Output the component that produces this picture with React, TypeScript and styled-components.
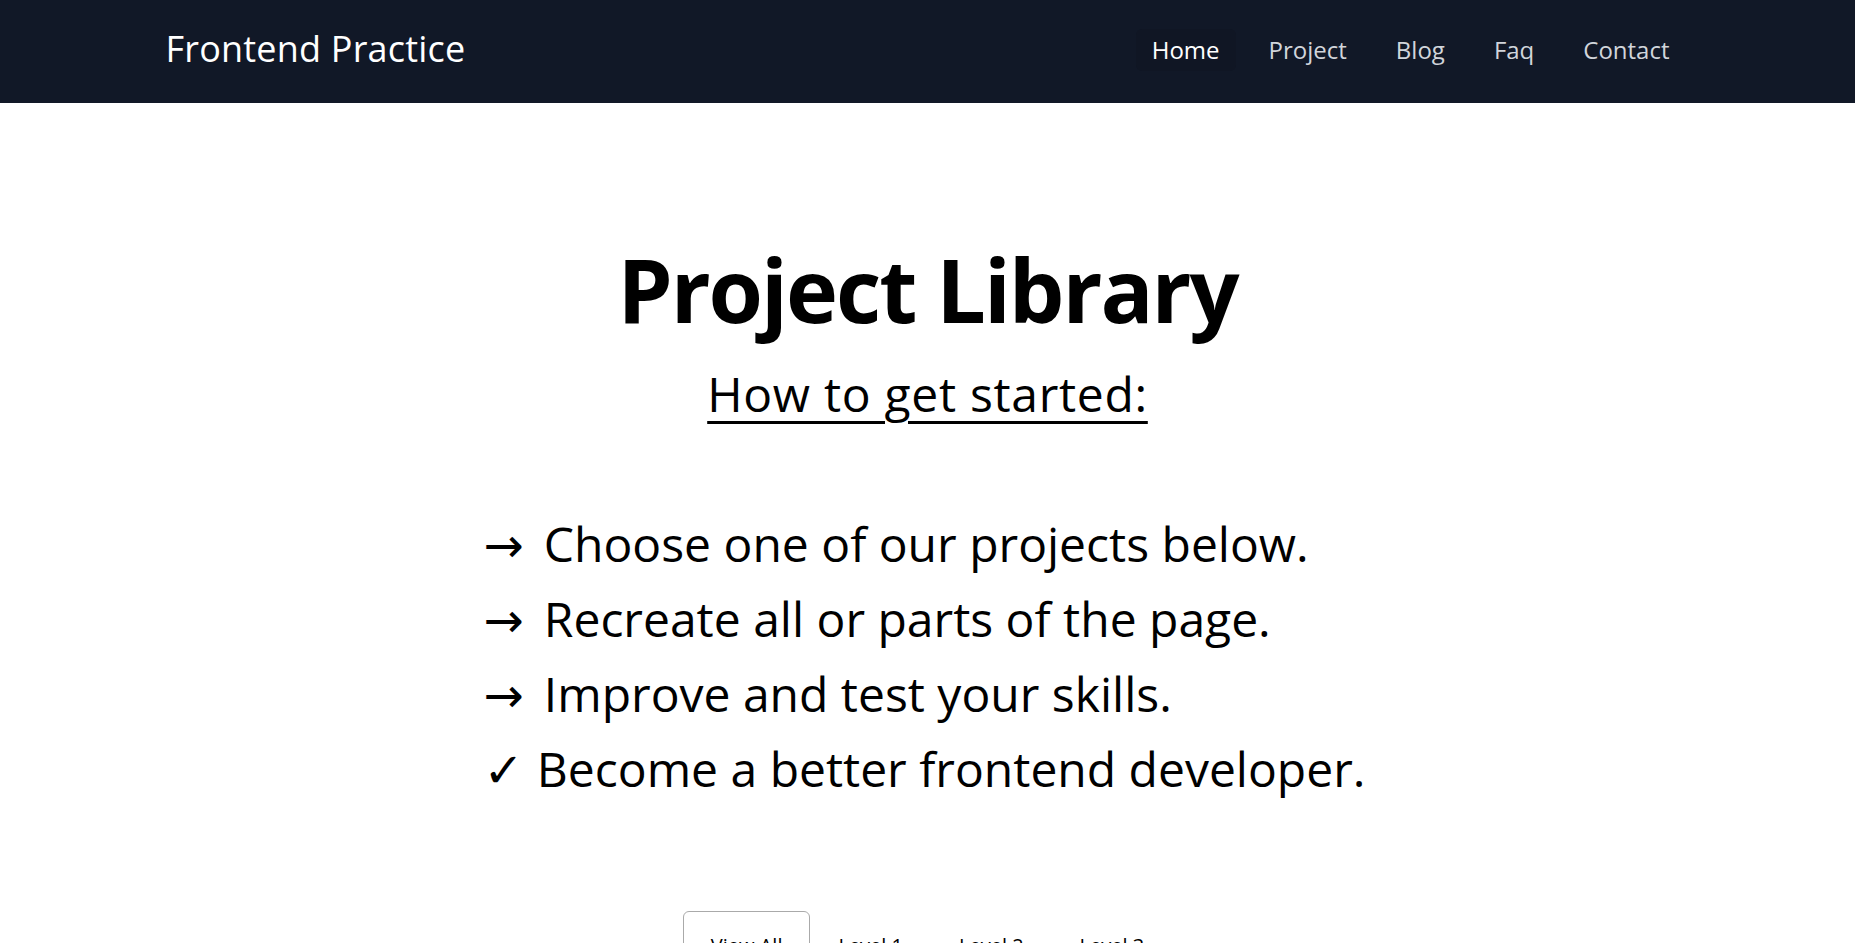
import * as React from "react";
import styled, { createGlobalStyle } from "styled-components";

const GlobalStyle = createGlobalStyle`
    html, body {
        margin: 0;
        padding: 0;
        background: #ffffff;
    }
    body {
        font-family: "Open Sans", "DejaVu Sans", sans-serif;
        color: #000000;
    }
    * {
        box-sizing: border-box;
    }
`;

const NavBar = styled.header`
    background: #111827;
    height: 103px;
    padding-bottom: 4px;
    display: flex;
    align-items: center;
`;

const NavInner = styled.div`
    width: 100%;
    max-width: 1536px;
    margin: 0 auto;
    padding: 0 8px 0 6px;
    display: flex;
    align-items: center;
    justify-content: space-between;
`;

const Logo = styled.a`
    font-size: 36px;
    line-height: 1;
    letter-spacing: 0.2px;
    color: #ffffff;
    text-decoration: none;
    padding-bottom: 2px;
`;

const NavList = styled.nav`
    display: flex;
    gap: 17px;
    margin-right: 2px;
`;

const NavLink = styled.a`
    display: flex;
    align-items: center;
    height: 42px;
    padding: 0 16px;
    border-radius: 6px;
    font-size: 24px;
    text-decoration: none;
    color: ${props => props.active ? '#ffffff' : '#d1d5db'};
    background: ${props => props.active ? '#101624' : 'transparent'};
`;

const Main = styled.main`
    display: flex;
    flex-direction: column;
    align-items: center;
    padding-top: 142px;
`;

const Title = styled.h1`
    margin: 0;
    font-size: 88px;
    line-height: 88px;
    font-weight: 700;
    letter-spacing: -2px;
`;

const Subtitle = styled.h2`
    margin: 25px 0 0 0;
    font-size: 48px;
    line-height: 72px;
    font-weight: 400;
    letter-spacing: 0.7px;
    text-decoration: underline;
    text-decoration-thickness: 3px;
    text-underline-offset: 9px;
`;

const Steps = styled.ul`
    list-style: none;
    margin: 76px 0 0 0;
    padding: 0 6px 0 0;
`;

const Step = styled.li`
    display: flex;
    align-items: baseline;
    height: 75px;
    font-size: 48px;
    line-height: 75px;
    white-space: nowrap;
`;

const Mark = styled.span`
    font-family: "DejaVu Sans", sans-serif;
    font-size: 48px;
    line-height: 75px;
    margin-right: ${props => props.gap}px;
`;

const Tabs = styled.div`
    display: flex;
    margin-top: 105px;
`;

const Tab = styled.button`
    font-family: "Open Sans", sans-serif;
    font-size: 20px;
    line-height: 28px;
    color: #000000;
    background: transparent;
    padding: 20px 27px;
    border: 1px solid ${props => props.active ? '#aaaaaa' : 'transparent'};
    border-radius: 6px;
    cursor: pointer;
`;

const links = ['Home', 'Project', 'Blog', 'Faq', 'Contact'];

const steps = [
    {mark: '→', gap: 20, text: 'Choose one of our projects below.'},
    {mark: '→', gap: 20, text: 'Recreate all or parts of the page.'},
    {mark: '→', gap: 20, text: 'Improve and test your skills.'},
    {mark: '✓', gap: 13, text: 'Become a better frontend developer.'},
];

const tabs = ['View All', 'Level 1', 'Level 2', 'Level 3'];

export default function App() {
    const [activeTab, setActiveTab] = React.useState('View All');

    return <>
        <GlobalStyle/>
        <NavBar>
            <NavInner>
                <Logo href="#">Frontend Practice</Logo>
                <NavList>
                    {links.map(link => <NavLink key={link} href="#" active={link === 'Home'}>{link}</NavLink>)}
                </NavList>
            </NavInner>
        </NavBar>
        <Main>
            <Title>Project Library</Title>
            <Subtitle>How to get started:</Subtitle>
            <Steps>
                {steps.map(step => <Step key={step.text}>
                    <Mark gap={step.gap}>{step.mark}</Mark>
                    <span>{step.text}</span>
                </Step>)}
            </Steps>
            <Tabs>
                {tabs.map(tab => <Tab key={tab} active={tab === activeTab}
                                      onClick={() => setActiveTab(tab)}>{tab}</Tab>)}
            </Tabs>
        </Main>
    </>;
}
